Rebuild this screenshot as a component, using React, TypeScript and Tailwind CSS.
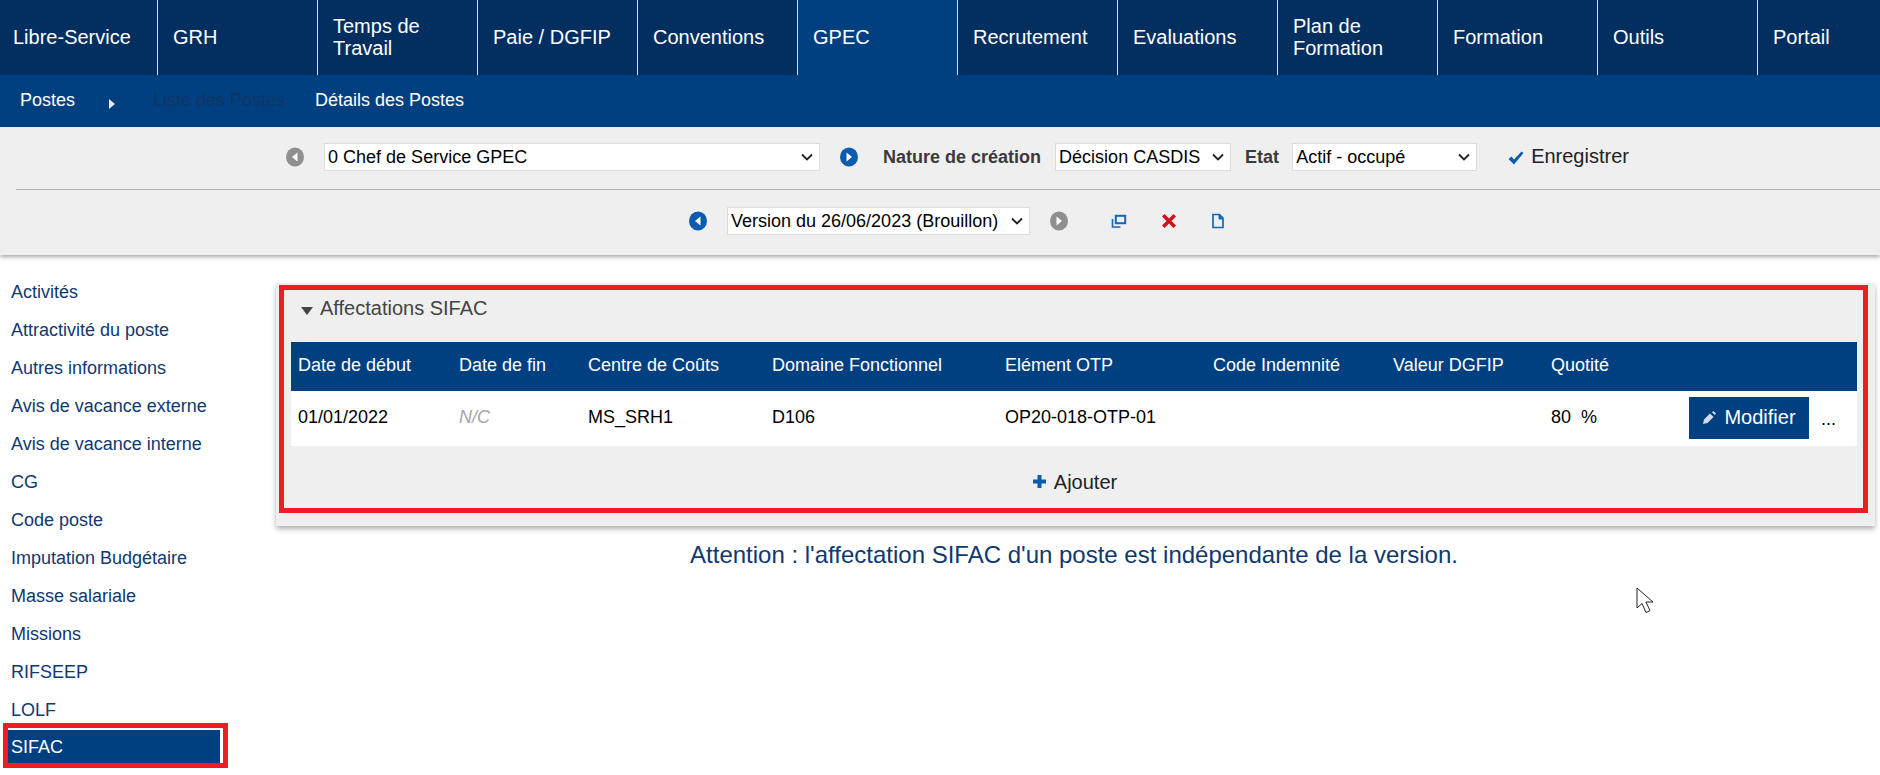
const topNav = [
  { label: "Libre-Service" },
  { label: "GRH" },
  { label: "Temps de Travail" },
  { label: "Paie / DGFIP" },
  { label: "Conventions" },
  { label: "GPEC", active: true },
  { label: "Recrutement" },
  { label: "Evaluations" },
  { label: "Plan de Formation" },
  { label: "Formation" },
  { label: "Outils" },
  { label: "Portail" },
];

const sideLinks = [
  "Activités",
  "Attractivité du poste",
  "Autres informations",
  "Avis de vacance externe",
  "Avis de vacance interne",
  "CG",
  "Code poste",
  "Imputation Budgétaire",
  "Masse salariale",
  "Missions",
  "RIFSEEP",
  "LOLF",
];

function RoundArrow({ dir, color }: { dir: "left" | "right"; color: string }) {
  return (
    <svg width="20" height="20" viewBox="0 0 20 20" className="shrink-0">
      <ellipse cx="10" cy="10" rx="9" ry="9.5" fill={color} />
      <path d={dir === "left" ? "M12.5 5.5v9L7 10z" : "M7.5 5.5v9L13 10z"} fill="#fff" />
    </svg>
  );
}

function Select({ value, className }: { value: string; className: string }) {
  return (
    <div className={`relative h-[28px] shrink-0 ${className}`}>
      <select
        defaultValue={value}
        className="h-full w-full appearance-none border border-[#dcdcdc] bg-white pb-[2px] pl-[3px] text-[18px] text-black outline-none"
      >
        <option>{value}</option>
      </select>
      <svg width="14" height="9" viewBox="0 0 14 9" className="pointer-events-none absolute right-[6px] top-[10px]">
        <path d="M2 1.5l5 5 5-5" fill="none" stroke="#222" strokeWidth="1.8" />
      </svg>
    </div>
  );
}

export default function App() {
  return (
    <div className="h-[775px] w-[1880px] overflow-hidden bg-white font-['Liberation_Sans',Arial,sans-serif]">
      {/* Main nav */}
      <nav className="flex h-[75px] bg-[#022f5f] text-[20px] leading-[22px] text-white">
        {topNav.map((item, i) => (
          <div
            key={item.label}
            className={`flex h-full shrink-0 items-center pb-[2px] pr-3 ${i === 0 ? "w-[158px] pl-[13px]" : "w-[160px] pl-[15px]"} ${
              i === topNav.length - 1 ? "" : "border-r border-[#d5dde6]"
            } ${item.active ? "bg-[#004080]" : ""}`}
          >
            <span className={item.label.length > 14 ? "w-[110px]" : ""}>{item.label}</span>
          </div>
        ))}
      </nav>

      {/* Sub nav */}
      <div className="flex h-[52px] items-center bg-[#004080] pb-[2px] text-[18px] text-white">
        <span className="ml-[20px] w-[88px]">Postes</span>
        <svg width="8" height="12" viewBox="0 0 8 12" className="mt-[8px] shrink-0">
          <path d="M1 1l6 5-6 5z" fill="#e8eef5" />
        </svg>
        <span className="ml-[37px] w-[162px] text-[#0f3566]">Liste des Postes</span>
        <span>Détails des Postes</span>
      </div>

      {/* Toolbar */}
      <div className="relative z-10 h-[128px] bg-[#efefef] pl-[16px] shadow-[0_2px_4px_rgba(0,0,0,0.35)]">
        <div className="flex h-[63px] items-center justify-center border-b border-[#b0b0b0] pb-[2px] pl-[18px]">
          <RoundArrow dir="left" color="#8f8f8f" />
          <Select value="0 Chef de Service GPEC" className="ml-[19px] w-[496px]" />
          <div className="ml-[19px]">
            <RoundArrow dir="right" color="#0b5cad" />
          </div>
          <span className="ml-[24px] text-[18px] font-bold text-[#3a3a3a]">Nature de création</span>
          <Select value="Décision CASDIS" className="ml-[14px] w-[176px]" />
          <span className="ml-[14px] text-[18px] font-bold text-[#3a3a3a]">Etat</span>
          <Select value="Actif - occupé" className="ml-[13px] w-[185px]" />
          <svg width="18" height="16" viewBox="0 0 18 16" className="ml-[30px] mt-[2px] shrink-0">
            <path d="M1.5 9l3-2.5 2.5 3L14.5 1.5 16.5 3 7 14.5z" fill="#0b5cad" />
          </svg>
          <span className="ml-[6px] mt-[-2px] text-[20px] text-[#222]">Enregistrer</span>
        </div>
        <div className="flex h-[64px] items-center pb-[2px] pl-[672px]">
          <RoundArrow dir="left" color="#0b5cad" />
          <Select value="Version du 26/06/2023 (Brouillon)" className="ml-[19px] w-[303px]" />
          <div className="ml-[19px]">
            <RoundArrow dir="right" color="#8f8f8f" />
          </div>
          <svg width="16" height="16" viewBox="0 0 16 16" className="ml-[42px] shrink-0">
            <path d="M1.5 6v8h8" fill="none" stroke="#1667b5" strokeWidth="1.6" />
            <rect x="4.8" y="2.8" width="9.4" height="7.4" fill="none" stroke="#1667b5" strokeWidth="2" />
          </svg>
          <svg width="18" height="18" viewBox="0 0 18 18" className="ml-[33px] shrink-0">
            <path d="M2 4.5L4.5 2 9 6.5 13.5 2 16 4.5 11.5 9l4.5 4.5-2.5 2.5L9 11.5 4.5 16 2 13.5 6.5 9z" fill="#d0101c" />
          </svg>
          <svg width="16" height="16" viewBox="0 0 16 16" className="ml-[32px] shrink-0">
            <path d="M3 1.5h6.5L13 5v9.5H3z" fill="#e8f0f8" stroke="#1667b5" strokeWidth="1.7" />
            <path d="M9 1.5V6h4" fill="#1667b5" stroke="#1667b5" />
          </svg>
        </div>
      </div>

      <div className="flex">
        {/* Side menu */}
        <aside className="w-[276px] shrink-0 pt-[18px]">
          {sideLinks.map((link) => (
            <div key={link} className="flex h-[38px] items-center pl-[11px] text-[18px] text-[#10386f]">
              {link}
            </div>
          ))}
          <div className="relative ml-[8px] mt-[1px] flex h-[33px] w-[212px] items-center bg-[#004080] pl-[3px] pt-[1px] text-[18px] text-white">
            SIFAC
            <div className="absolute -bottom-[5px] -left-[5px] -right-[8px] -top-[7px] border-[5px] border-[#ee1c25]" />
          </div>
        </aside>

        {/* Content */}
        <main className="w-[1599px] shrink-0 pt-[28px]">
          <section className="relative h-[243px] bg-[#efefef] px-[15px] pt-[10px] shadow-[0_3px_5px_rgba(0,0,0,0.3)]">
            <div className="absolute bottom-[13px] left-[3px] right-[7px] top-[2px] border-[5px] border-[#ee1c25]" />
            <h2 className="flex h-[49px] items-center pb-[20px] pl-[10px] text-[20px] font-normal text-[#444]">
              <svg width="12" height="8" viewBox="0 0 12 8" className="mr-[7px] mt-[6px] shrink-0">
                <path d="M0 0h12L6 8z" fill="#444" />
              </svg>
              Affectations SIFAC
            </h2>
            <table className="w-[1566px] table-fixed border-collapse bg-white text-[18px]">
              <thead>
                <tr className="h-[49px] bg-[#004080] text-left text-white">
                  <th className="w-[161px] pb-[2px] pl-[7px] font-normal">Date de début</th>
                  <th className="w-[129px] pb-[2px] pl-[7px] font-normal">Date de fin</th>
                  <th className="w-[184px] pb-[2px] pl-[7px] font-normal">Centre de Coûts</th>
                  <th className="w-[233px] pb-[2px] pl-[7px] font-normal">Domaine Fonctionnel</th>
                  <th className="w-[208px] pb-[2px] pl-[7px] font-normal">Elément OTP</th>
                  <th className="w-[180px] pb-[2px] pl-[7px] font-normal">Code Indemnité</th>
                  <th className="w-[158px] pb-[2px] pl-[7px] font-normal">Valeur DGFIP</th>
                  <th className="w-[145px] pb-[2px] pl-[7px] font-normal">Quotité</th>
                  <th className="font-normal"></th>
                </tr>
              </thead>
              <tbody>
                <tr className="h-[55px] text-black">
                  <td className="pb-[2px] pl-[7px]">01/01/2022</td>
                  <td className="pb-[2px] pl-[7px] italic text-[#a6a6a6]">N/C</td>
                  <td className="pb-[2px] pl-[7px]">MS_SRH1</td>
                  <td className="pb-[2px] pl-[7px]">D106</td>
                  <td className="pb-[2px] pl-[7px]">OP20-018-OTP-01</td>
                  <td className="pl-[7px]"></td>
                  <td className="pl-[7px]"></td>
                  <td className="whitespace-pre pb-[2px] pl-[7px]">80  %</td>
                  <td className="whitespace-nowrap">
                    <div className="flex items-center pb-[2px]">
                      <button className="flex h-[42px] w-[120px] items-center justify-center gap-[7px] bg-[#004080] pb-[2px] text-[20px] text-white">
                        <svg width="15" height="15" viewBox="0 0 15 15" className="mt-[2px] shrink-0">
                          <path d="M1 14l1-4.5 6-6 3.5 3.5-6 6z" fill="#cfdcea" />
                          <path d="M10 2.2l1.4-1.2 2.6 2.6-1.2 1.4z" fill="#cfdcea" />
                        </svg>
                        Modifier
                      </button>
                      <span className="ml-[12px] mt-[4px]">...</span>
                    </div>
                  </td>
                </tr>
              </tbody>
            </table>
            <div className="flex h-[71px] items-center justify-center pr-[2px] text-[20px] text-[#222]">
              <svg width="15" height="15" viewBox="0 0 15 15" className="mr-[7px] shrink-0">
                <path d="M5.5 1h4v4.5H14v4H9.5V14h-4V9.5H1v-4h4.5z" fill="#0b5cad" />
              </svg>
              Ajouter
            </div>
          </section>
          <p className="mt-[11px] pr-[3px] text-center text-[24px] text-[#10386f]">
            Attention : l'affectation SIFAC d'un poste est indépendante de la version.
          </p>
        </main>
      </div>

      {/* Mouse pointer */}
      <svg width="20" height="28" viewBox="0 0 20 28" className="absolute left-[1636px] top-[587px]">
        <path d="M1 1v20l5-4.5 4 9 4-1.8-4-8.7h7z" fill="#fff" stroke="#222" strokeWidth="1" />
      </svg>
    </div>
  );
}
